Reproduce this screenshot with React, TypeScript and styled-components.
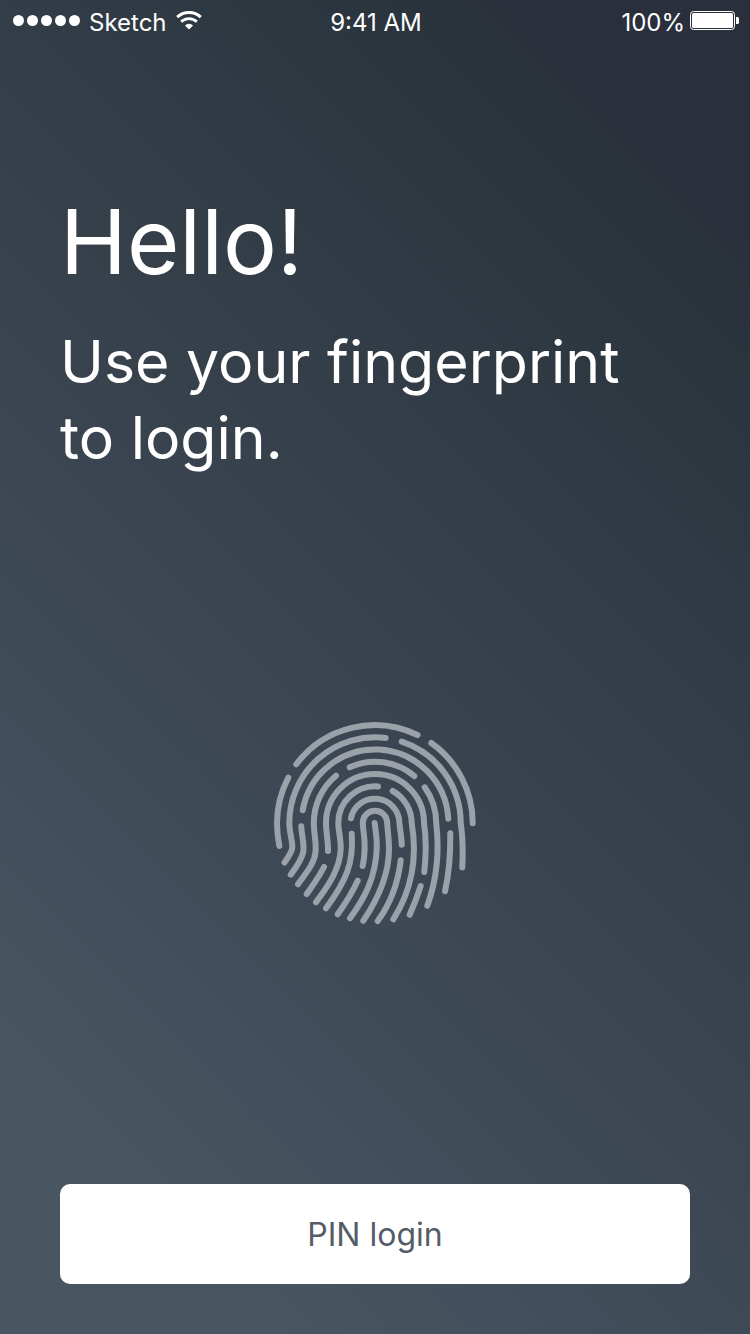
import React from "react";
import styled, { createGlobalStyle } from "styled-components";

const GlobalStyle = createGlobalStyle`
  * { box-sizing: border-box; }
  body {
    margin: 0;
    font-family: Inter, "Liberation Sans", sans-serif;
    color: #fff;
  }
`;

const Screen = styled.div`
  display: flex;
  flex-direction: column;
  min-height: 100vh;
  background: linear-gradient(225deg, #2a303b 11%, #2a343d 17%, #333d47 36%, #3f4a57 65%, #485662 87%);
`;

const StatusBar = styled.header`
  display: grid;
  grid-template-columns: 1fr auto 1fr;
  align-items: center;
  height: 40px;
  padding: 6px 11px 0 13px;
  font-size: 24px;
  line-height: 28px;
`;

const StatusGroup = styled.div<{ $end?: boolean }>`
  display: flex;
  align-items: center;
  justify-content: ${(p) => (p.$end ? "flex-end" : "flex-start")};
  gap: ${(p) => (p.$end ? 5 : 9)}px;
`;

const StatusIcon = styled.svg`
  display: block;
  flex: none;
  margin-bottom: 6px;
`;

const Main = styled.main`
  display: flex;
  flex: 1;
  flex-direction: column;
  padding: 148px 60px 50px;
`;

const Title = styled.h1`
  margin: 0;
  font-size: 90px;
  font-weight: 400;
  line-height: 108px;
`;

const Subtitle = styled.p`
  margin: 28px 0 0;
  font-size: 59px;
  font-weight: 400;
  line-height: 76px;
`;

const SensorArea = styled.div`
  display: flex;
  flex: 1;
  align-items: center;
  justify-content: center;
  padding-bottom: 16px;
`;

const PinButton = styled.button`
  height: 100px;
  border: 0;
  border-radius: 10px;
  background: #fff;
  color: #545d67;
  font-family: inherit;
  font-size: 32px;
  cursor: pointer;
`;

const ridges = [
  "M26.3 49.3A98 98 0 0 1 147.5 20",
  "M161.3 28A98 98 0 0 1 202.7 108.3",
  "M18.3 62.7A98 98 0 0 0 7 108C7 116 8 124 9.3 131",
  "M115.7 23A85.7 85.7 0 0 0 19.3 108C19.3 118 22.3 124 22.3 132C22.3 137 18 142 14.5 147.5",
  "M131.7 26.6A85.7 85.7 0 0 1 190.7 108C193 123 193 138 192.3 152.3",
  "M32.7 95.3A73.4 73.4 0 0 1 178.3 103.7",
  "M31.3 111.3C31.5 121 35 130 33 138C31 146 26 152.5 20.7 159.7",
  "M180.3 118.3C180.5 139 179 159 175 176.3",
  "M79.7 52.3A61.2 61.2 0 0 1 144.3 61",
  "M66 60.7A61.2 61.2 0 0 0 43.8 108C43.8 118 46.5 127 45.5 137C44.5 149 35 159 28 169.3",
  "M54 152C49 162 43 170 36.7 179",
  "M154.7 72.3A61.2 61.2 0 0 1 166.2 108C169.5 136 167 164 157.3 190.7",
  "M58 136C58.3 126 56 118 56 108A49 49 0 0 1 154 108C156.5 124 156 141 154.3 157",
  "M150.7 171C147.5 181 144 190 139.7 199.7",
  "M108 71.4A36.7 36.7 0 0 0 68.3 108C68.3 116 71 124 70.7 134C70 155 57 172 46 187.3",
  "M122.7 76A36.7 36.7 0 0 1 141.7 108C148 145 140 178 123.3 204.3",
  "M80.9 103.3A24.5 24.5 0 0 1 129.4 108C130 115 131.6 122 131.7 129.7",
  "M130.7 145.3C128 169 120 189 107.7 206",
  "M81.7 118.7C84 148 76 166 56 193.3",
  "M87.7 165.7C82 178 75 189 67.7 199.3",
  "M92.7 151C97.5 128 92.8 118 92.8 108A12.2 12.2 0 0 1 117.2 108C117.5 114 119 124 119 134C119 160 108 184 93.3 205.7",
  "M104.7 108C105.5 115 107 123 106.8 132C106 163 94 184 80 203.3",
];

function SignalIcon() {
  return (
    <StatusIcon width="67" height="11" viewBox="0 0 67 11" fill="#fff" role="img" aria-label="Signal strength">
      {[5.5, 19.5, 33.5, 47.5, 61.5].map((x) => (
        <circle key={x} cx={x} cy="5.5" r="5.5" />
      ))}
    </StatusIcon>
  );
}

function WifiIcon() {
  return (
    <StatusIcon width="26" height="19" viewBox="0 0 26 19" fill="none" role="img" aria-label="Wi-Fi">
      <path d="M1.2 6.2A17 17 0 0 1 24.8 6.2" stroke="#fff" strokeWidth="3" />
      <path d="M5.2 10.8A11 11 0 0 1 20.8 10.8" stroke="#fff" strokeWidth="2.8" />
      <path d="M13 18.6L8.9 14.4A6 6 0 0 1 17.1 14.4Z" fill="#fff" />
    </StatusIcon>
  );
}

function BatteryIcon() {
  return (
    <StatusIcon width="49" height="19" viewBox="0 0 49 19" fill="none" role="img" aria-label="Battery full">
      <rect x="0.5" y="0.5" width="44" height="18" rx="3" stroke="#fff" />
      <rect x="2" y="2" width="41" height="15" rx="1.5" fill="#fff" />
      <path d="M46 6H47.5Q49 6 49 7.5V11.5Q49 13 47.5 13H46Z" fill="#fff" />
    </StatusIcon>
  );
}

function Fingerprint() {
  return (
    <svg
      width="210"
      height="215"
      viewBox="0 0 210 215"
      fill="none"
      stroke="#9ba1a9"
      strokeWidth="6"
      strokeLinecap="round"
      role="img"
      aria-label="Fingerprint sensor"
    >
      {ridges.map((d) => (
        <path key={d} d={d} />
      ))}
    </svg>
  );
}

export default function App() {
  return (
    <>
      <GlobalStyle />
      <Screen>
        <StatusBar>
          <StatusGroup>
            <SignalIcon />
            <span>Sketch</span>
            <WifiIcon />
          </StatusGroup>
          <time>9:41 AM</time>
          <StatusGroup $end>
            <span>100%</span>
            <BatteryIcon />
          </StatusGroup>
        </StatusBar>
        <Main>
          <Title>Hello!</Title>
          <Subtitle>
            Use your fingerprint
            <br />
            to login.
          </Subtitle>
          <SensorArea>
            <Fingerprint />
          </SensorArea>
          <PinButton type="button">PIN login</PinButton>
        </Main>
      </Screen>
    </>
  );
}
